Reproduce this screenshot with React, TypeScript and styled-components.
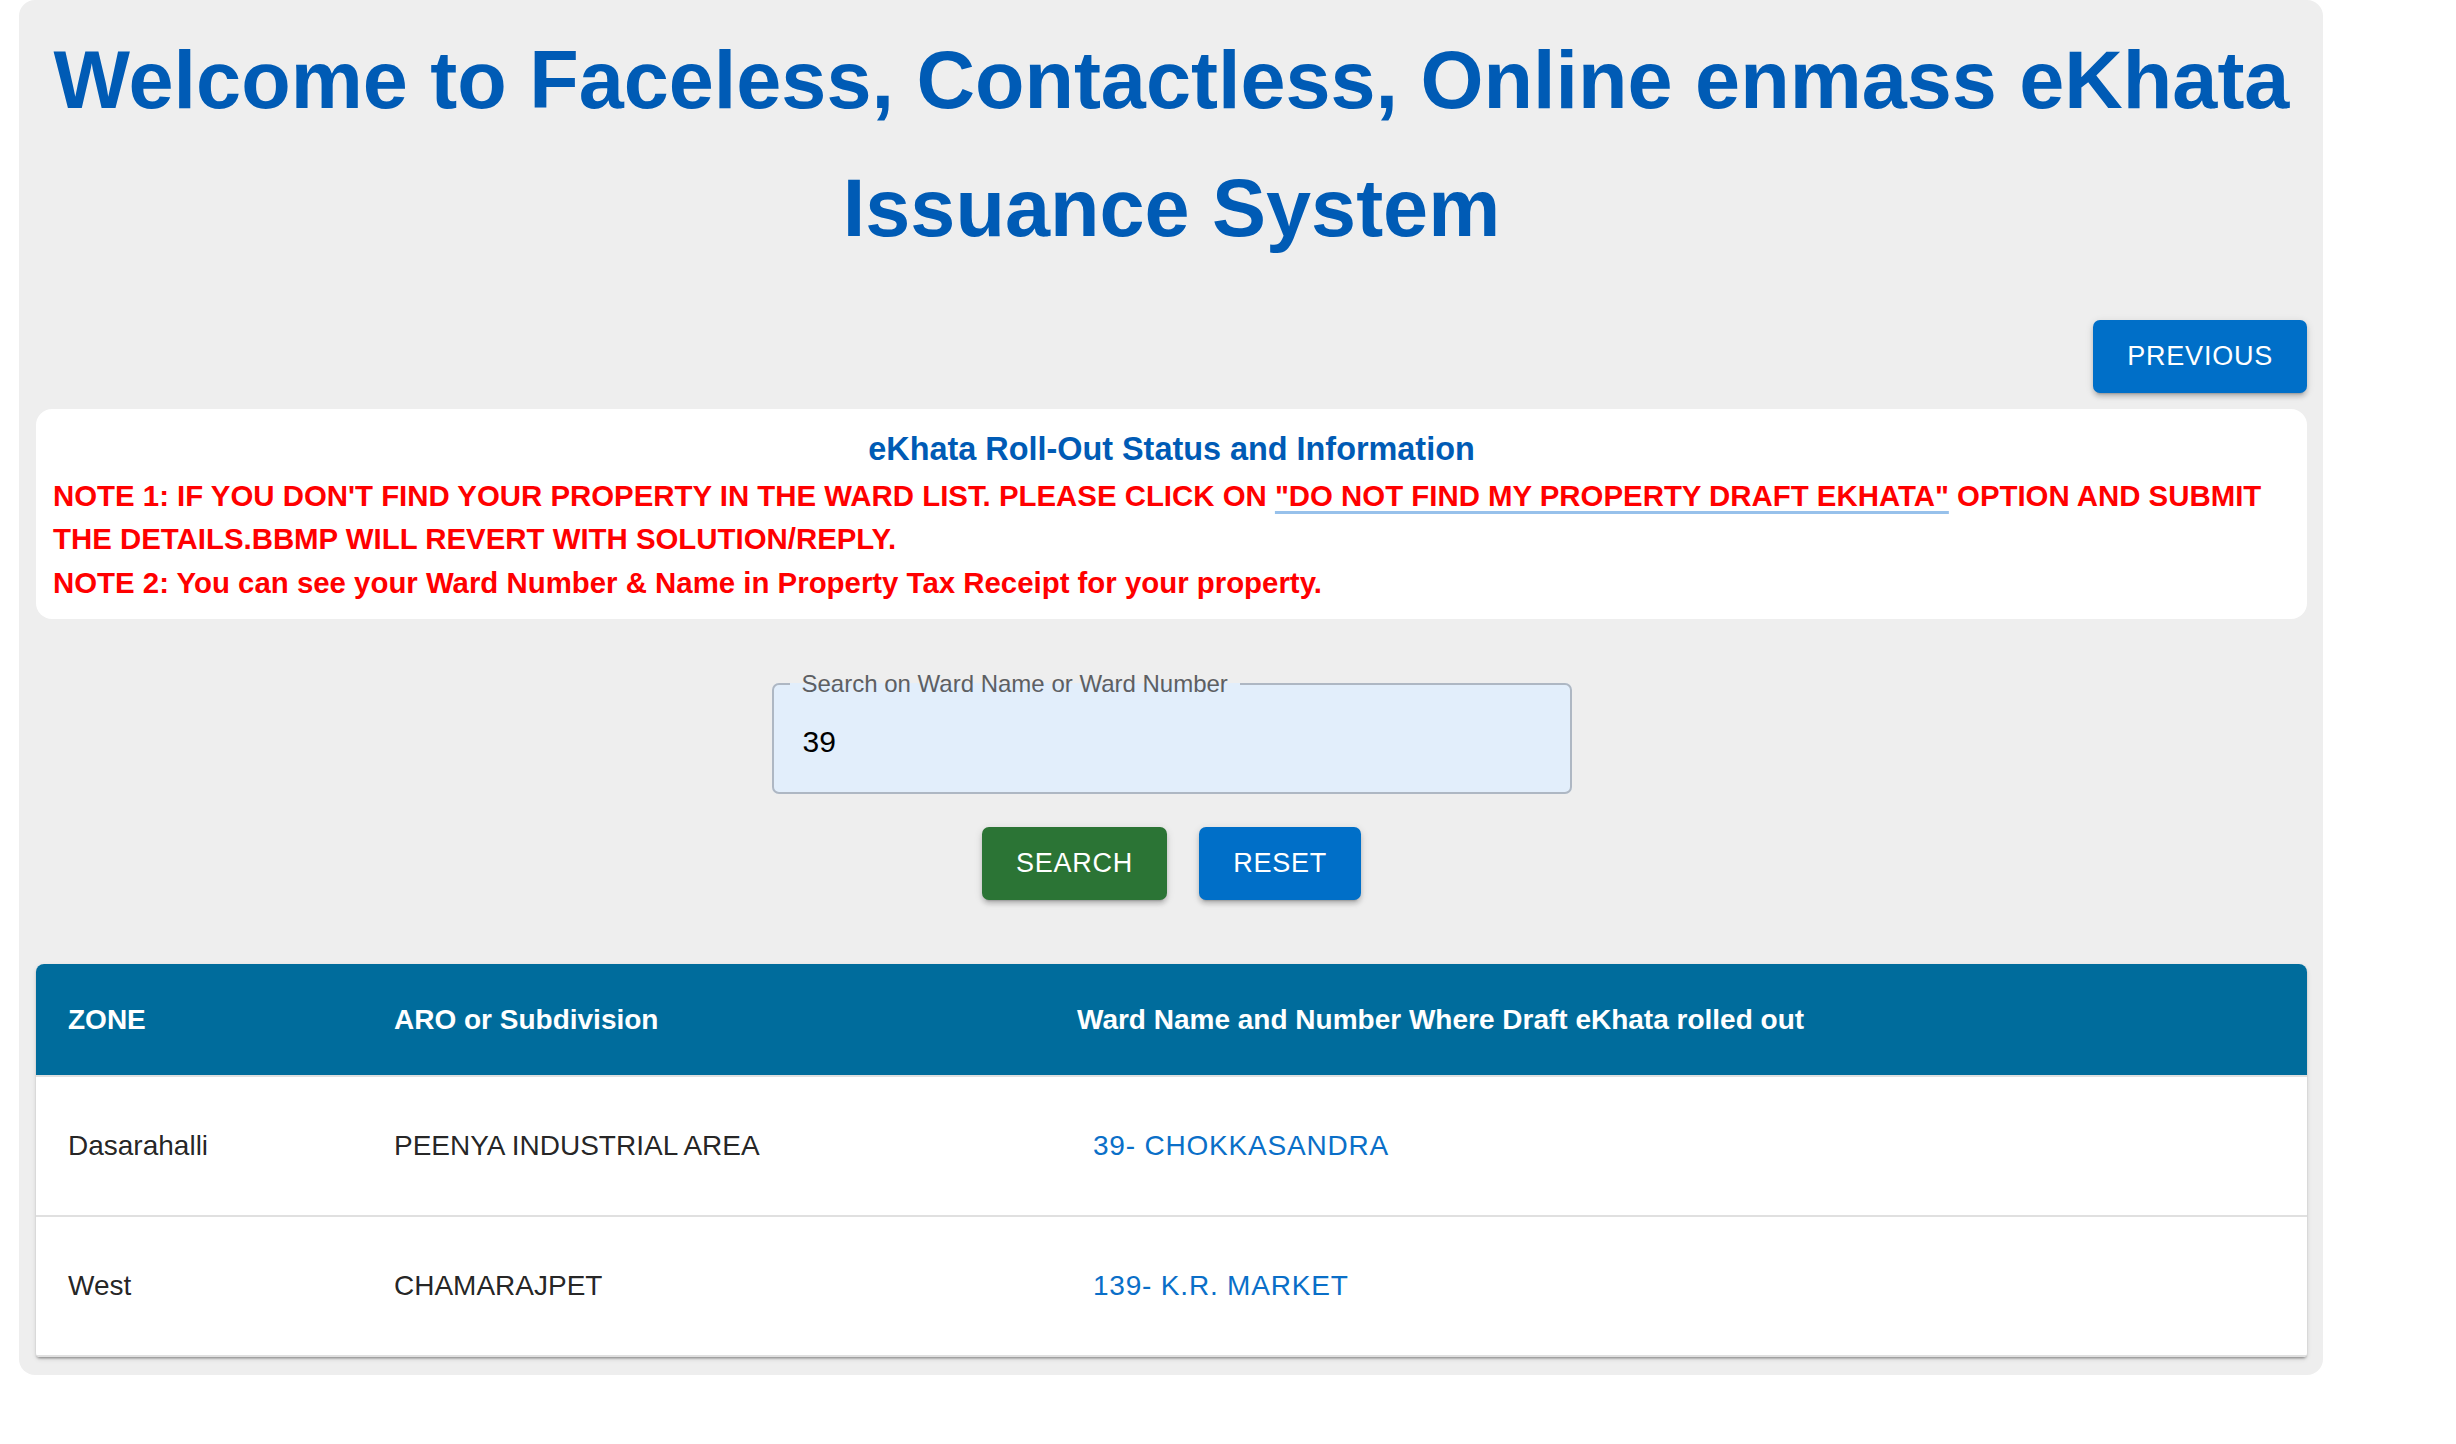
import React from "react";
import styled, { createGlobalStyle } from "styled-components";

const GlobalStyle = createGlobalStyle`
  html, body {
    margin: 0;
    padding: 0;
    background: #ffffff;
  }
  body {
    font-family: "Liberation Sans", Arial, Helvetica, sans-serif;
  }
  * { box-sizing: border-box; }
`;

const Page = styled.div`
  padding: 0 0 0 19px;
`;

const Shell = styled.main`
  width: 2304px;
  background: #eeeeee;
  border-radius: 16px;
  padding: 16px 16px 18px 17px;
  display: flex;
  flex-direction: column;
`;

const Title = styled.h1`
  margin: 0;
  text-align: center;
  color: #005bb5;
  font-size: 81px;
  line-height: 128px;
  font-weight: 700;
`;

const Toolbar = styled.div`
  display: flex;
  justify-content: flex-end;
  margin-top: 48px;
`;

const Button = styled.button<{ $tone: "blue" | "green" }>`
  height: 73px;
  padding: 0 34px;
  border: none;
  border-radius: 7px;
  background: ${(p) => (p.$tone === "green" ? "#2b7435" : "#006fc8")};
  color: #ffffff;
  font-family: "Liberation Sans", Arial, sans-serif;
  font-size: 27px;
  font-weight: 400;
  letter-spacing: 0.77px;
  text-transform: uppercase;
  cursor: pointer;
  box-shadow: 0 5px 2px -4px rgba(0, 0, 0, 0.2), 0 4px 4px 0 rgba(0, 0, 0, 0.14),
    0 2px 9px 0 rgba(0, 0, 0, 0.12);
`;

const InfoCard = styled.section`
  margin-top: 16px;
  background: #ffffff;
  border-radius: 16px;
  padding: 16px 17px 15px;
`;

const InfoHeading = styled.h2`
  margin: 0;
  text-align: center;
  color: #005bb5;
  font-size: 32.4px;
  line-height: 48.6px;
  font-weight: 700;
`;

const Note = styled.p`
  margin: 0;
  color: #ff0000;
  font-size: 29.4px;
  line-height: 43.5px;
  font-weight: 700;
`;

const NoteLink = styled.a`
  color: #ff0000;
  text-decoration: underline;
  text-decoration-color: rgba(25, 118, 210, 0.45);
  text-decoration-thickness: 3px;
  text-underline-offset: 5px;
  cursor: pointer;
`;

const SearchArea = styled.div`
  margin-top: 51px;
  display: flex;
  flex-direction: column;
  align-items: center;
`;

const Field = styled.fieldset`
  margin: 0;
  width: 800px;
  height: 124px;
  padding: 0 16px 0 16px;
  border: 2px solid #aeb7c3;
  border-radius: 7px;
  background: #e2eefb;
  display: flex;
  align-items: center;
`;

const FieldLabel = styled.legend`
  padding: 0 12px;
  margin-left: 0;
  font-size: 24px;
  line-height: 28px;
  color: #5d5f63;
`;

const FieldInput = styled.input`
  width: 100%;
  height: 72px;
  margin-top: 8px;
  padding: 0 0 0 13px;
  border: none;
  outline: none;
  background: transparent;
  font-family: "Liberation Sans", Arial, sans-serif;
  font-size: 30px;
  color: #000000;
`;

const Actions = styled.div`
  display: flex;
  gap: 32px;
  margin-top: 33px;
`;

const TableCard = styled.div`
  margin-top: 64px;
  background: #ffffff;
  border-radius: 8px 8px 4px 4px;
  overflow: hidden;
  box-shadow: 0 3px 2px -2px rgba(0, 0, 0, 0.2), 0 2px 2px 0 rgba(0, 0, 0, 0.14),
    0 2px 5px 0 rgba(0, 0, 0, 0.12);
`;

const Table = styled.table`
  width: 100%;
  border-collapse: collapse;
  table-layout: fixed;
`;

const HeadCell = styled.th<{ $w?: number }>`
  width: ${(p) => (p.$w ? `${p.$w}px` : "auto")};
  height: 112px;
  padding: 0 32px;
  background: #006c9c;
  color: #ffffff;
  text-align: left;
  font-size: 28px;
  font-weight: 700;
  border-bottom: 2px solid #e0e0e0;
`;

const Cell = styled.td`
  height: 140px;
  padding: 0 32px;
  color: rgba(0, 0, 0, 0.87);
  font-size: 28px;
  border-bottom: 2px solid #e0e0e0;
`;

const WardLink = styled.a`
  display: inline-block;
  padding: 0 16px;
  color: #0a6fc8;
  font-size: 28px;
  letter-spacing: 0.8px;
  text-transform: uppercase;
  text-decoration: none;
  cursor: pointer;
`;

const rows = [
  { zone: "Dasarahalli", aro: "PEENYA INDUSTRIAL AREA", ward: "39- CHOKKASANDRA" },
  { zone: "West", aro: "CHAMARAJPET", ward: "139- K.R. MARKET" },
];

export default function App() {
  return (
    <>
      <GlobalStyle />
      <Page>
        <Shell>
          <Title>
            Welcome to Faceless, Contactless, Online enmass eKhata Issuance System
          </Title>
          <Toolbar>
            <Button $tone="blue">Previous</Button>
          </Toolbar>
          <InfoCard>
            <InfoHeading>eKhata Roll-Out Status and Information</InfoHeading>
            <Note>
              NOTE 1: IF YOU DON'T FIND YOUR PROPERTY IN THE WARD LIST. PLEASE CLICK ON{" "}
              <NoteLink>"DO NOT FIND MY PROPERTY DRAFT EKHATA"</NoteLink> OPTION AND SUBMIT THE
              DETAILS.BBMP WILL REVERT WITH SOLUTION/REPLY.
            </Note>
            <Note>
              NOTE 2: You can see your Ward Number &amp; Name in Property Tax Receipt for your
              property.
            </Note>
          </InfoCard>
          <SearchArea>
            <Field>
              <FieldLabel>Search on Ward Name or Ward Number</FieldLabel>
              <FieldInput defaultValue="39" />
            </Field>
            <Actions>
              <Button $tone="green">Search</Button>
              <Button $tone="blue">Reset</Button>
            </Actions>
          </SearchArea>
          <TableCard>
            <Table>
              <thead>
                <tr>
                  <HeadCell $w={326}>ZONE</HeadCell>
                  <HeadCell $w={683}>ARO or Subdivision</HeadCell>
                  <HeadCell>Ward Name and Number Where Draft eKhata rolled out</HeadCell>
                </tr>
              </thead>
              <tbody>
                {rows.map((r) => (
                  <tr key={r.ward}>
                    <Cell>{r.zone}</Cell>
                    <Cell>{r.aro}</Cell>
                    <Cell>
                      <WardLink>{r.ward}</WardLink>
                    </Cell>
                  </tr>
                ))}
              </tbody>
            </Table>
          </TableCard>
        </Shell>
      </Page>
    </>
  );
}
